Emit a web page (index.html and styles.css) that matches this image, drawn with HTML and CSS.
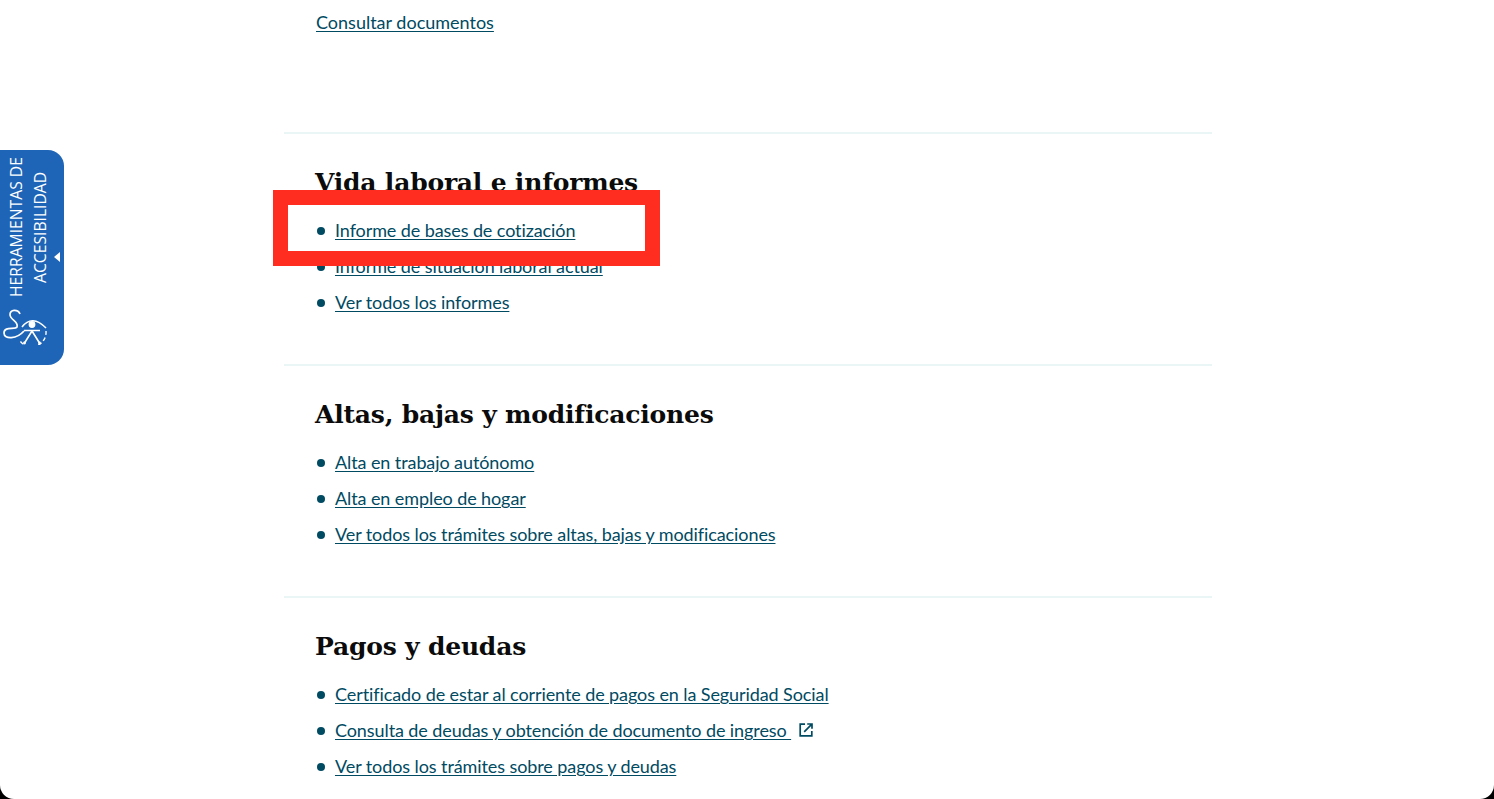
FILE: index.html
```html
<!DOCTYPE html>
<html lang="es">
<head>
<meta charset="UTF-8">
<title>Tramites</title>
<link rel="stylesheet" href="styles.css">
</head>
<body>
<div class="page">
	<div class="main">
		<div class="top">
			<a href="#">Consultar documentos</a>
		</div>

		<div class="section">
			<h2>Vida laboral e informes</h2>
			<ul>
				<li><a href="#">Informe de bases de cotización</a></li>
				<li><a href="#">Informe de situación laboral actual</a></li>
				<li><a href="#">Ver todos los informes</a></li>
			</ul>
		</div>

		<div class="section">
			<h2>Altas, bajas y modificaciones</h2>
			<ul>
				<li><a href="#">Alta en trabajo autónomo</a></li>
				<li><a href="#">Alta en empleo de hogar</a></li>
				<li><a href="#">Ver todos los trámites sobre altas, bajas y modificaciones</a></li>
			</ul>
		</div>

		<div class="section">
			<h2>Pagos y deudas</h2>
			<ul>
				<li><a href="#">Certificado de estar al corriente de pagos en la Seguridad Social</a></li>
				<li>
					<a href="#">Consulta de deudas y obtención de documento de ingreso&nbsp;</a>
					<svg class="ext" width="14" height="14" viewBox="0 0 14 14" fill="none" stroke="#004a62" stroke-width="1.700">
						<path d="M6 1.200H1.200v11.600h11.600V8"/>
						<path d="M5.200 8.800L12.600 1.400M8.200 1h4.800v4.800"/>
					</svg>
				</li>
				<li><a href="#">Ver todos los trámites sobre pagos y deudas</a></li>
			</ul>
		</div>
	</div>

	<div class="a11y-tab">
		<div class="a11y-text">
			<span class="a11y-label">Herramientas de accesibilidad</span>
			<span class="a11y-caret"></span>
		</div>
		<svg class="a11y-logo" width="46" height="38" viewBox="0 0 46 38" fill="none" stroke="#fff">
			<path d="M17 7C15 2 6.500 2 7 8C7.500 13 16 15 14 20C12 23 1 19 1 26C1 33 14 32 21 24" stroke-width="1.700"/>
			<path d="M19 20Q29 7 43 21" stroke-width="1.600"/>
			<path d="M43 24A14.500 14.500 0 0 1 17 34" stroke-width="1.400" stroke-dasharray="4 2.500"/>
			<circle cx="29" cy="17.500" r="3.400" fill="#fff" stroke="none"/>
			<path d="M21 23.500H37M29 24L21.500 36M29 24L36.500 36" stroke-width="1.600"/>
			<circle cx="21.500" cy="36" r="1.400" fill="#fff" stroke="none"/>
			<circle cx="36.500" cy="36" r="1.400" fill="#fff" stroke="none"/>
		</svg>
	</div>

	<div class="highlight"></div>
</div>
</body>
</html>
```

FILE: styles.css
```css
* {
	box-sizing: border-box;
	margin: 0;
	padding: 0;
}

html, body {
	height: 100%;
	background: #000;
	overflow: hidden;
}

body {
	font-family: Lato, 'Liberation Sans', sans-serif;
}

.page {
	position: relative;
	height: 799px;
	background: #fff;
	border-radius: 0 0 14px 14px;
	overflow: hidden;
}

.main {
	width: 928px;
	margin-left: 284px;
}

a {
	color: #004a62;
	font-size: 18px;
	line-height: 24px;
	text-decoration: underline;
	text-underline-offset: 2px;
}

li a {
	letter-spacing: -0.09px;
}

.top {
	height: 132px;
	padding: 10px 0 0 32px;
}

.section {
	height: 232px;
	padding: 31px 32px 0;
	border-top: 2px solid #eaf5f5;
}

.section h2 {
	font-family: 'DejaVu Serif', 'Liberation Serif', serif;
	font-size: 25px;
	line-height: 36px;
	letter-spacing: -0.2px;
	font-weight: 700;
	color: #0b0b0b;
	margin: 0 0 11px -1px;
}

ul {
	list-style: none;
}

li {
	display: flex;
	align-items: center;
	height: 36px;
}

li::before {
	content: "";
	width: 8px;
	height: 8px;
	margin: 2px 10px 0 1px;
	border-radius: 50%;
	background: #004a62;
}

.ext {
	margin-left: 8px;
}

/* side tab */
.a11y-tab {
	position: absolute;
	top: 150px;
	left: 0;
	width: 64px;
	height: 215px;
	padding-top: 7px;
	background: #1e65b8;
	border-radius: 0 16px 16px 0;
	display: flex;
	flex-direction: column;
	align-items: flex-start;
}

.a11y-text {
	display: flex;
	height: 140px;
	padding-left: 4px;
}

.a11y-label {
	writing-mode: vertical-rl;
	transform: rotate(180deg);
	width: 48px;
	margin-right: 2px;
	font-family: 'Open Sans', 'Noto Sans', sans-serif;
	font-size: 15.700px;
	line-height: 24px;
	text-align: center;
	text-transform: uppercase;
	color: #fff;
}

.a11y-caret {
	align-self: flex-end;
	margin-bottom: 35px;
	width: 0;
	height: 0;
	border-top: 5px solid transparent;
	border-bottom: 5px solid transparent;
	border-right: 6px solid #fff;
}

.a11y-logo {
	margin: 10px 0 0 3px;
}

/* red box on top of the screenshot */
.highlight {
	position: absolute;
	top: 190px;
	left: 273px;
	width: 387px;
	height: 76px;
	border: 15px solid #ff2d20;
}
```
